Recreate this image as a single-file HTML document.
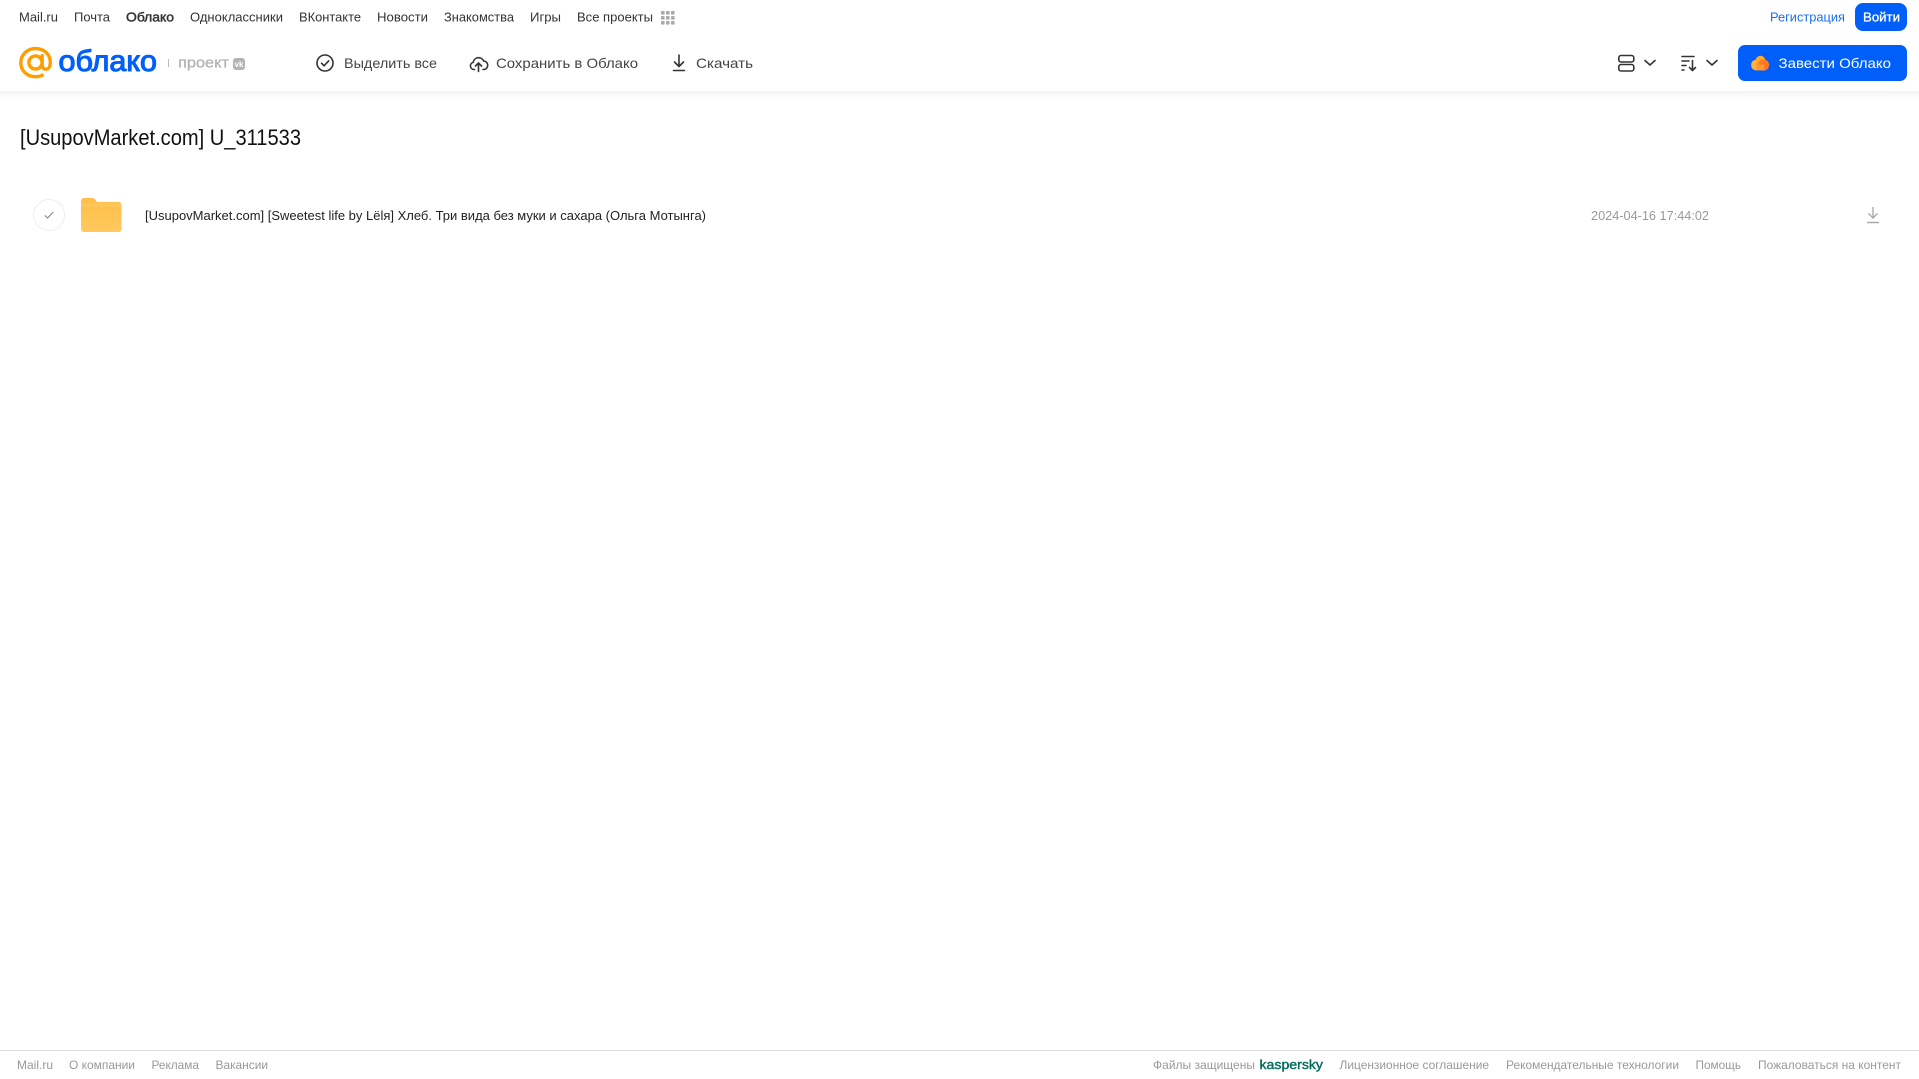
<!DOCTYPE html>
<html lang="ru">
<head>
<meta charset="utf-8">
<title>[UsupovMarket.com] U_311533</title>
<style>
html,body{margin:0;padding:0;width:1919px;height:1079px;overflow:hidden;background:#fff}
svg{position:absolute;left:0;top:0;display:block}
text{font-family:"Liberation Sans",Arial,sans-serif}
.n{font-size:13px;fill:#333}
.h{font-size:14px;fill:#444}
.f{font-size:12px;fill:#999}
.i{fill:none;stroke:#333;stroke-width:1.6;stroke-linecap:round;stroke-linejoin:round}
</style>
</head>
<body>
<svg width="1919" height="1079" viewBox="0 0 1919 1079" xmlns="http://www.w3.org/2000/svg">
<defs>
<linearGradient id="sh" x1="0" y1="0" x2="0" y2="1"><stop offset="0" stop-color="#f4f4f4"/><stop offset="1" stop-color="#fff"/></linearGradient>
<linearGradient id="fd" x1="0" y1="0" x2="0" y2="1"><stop offset="0" stop-color="#ffbe45"/><stop offset="1" stop-color="#ffc95f"/></linearGradient>
</defs>
<rect x="0" y="91" width="1919" height="9" fill="url(#sh)"/>

<!-- top nav -->
<text class="n" x="19" y="21.5" textLength="39" lengthAdjust="spacingAndGlyphs">Mail.ru</text>
<text class="n" x="74" y="21.5" textLength="36" lengthAdjust="spacingAndGlyphs">Почта</text>
<text class="n" x="126" y="21.5" textLength="48" lengthAdjust="spacingAndGlyphs" stroke="#333" stroke-width=".45">Облако</text>
<text class="n" x="190" y="21.5" textLength="93" lengthAdjust="spacingAndGlyphs">Одноклассники</text>
<text class="n" x="299" y="21.5" textLength="62" lengthAdjust="spacingAndGlyphs">ВКонтакте</text>
<text class="n" x="377" y="21.5" textLength="51" lengthAdjust="spacingAndGlyphs">Новости</text>
<text class="n" x="444" y="21.5" textLength="70" lengthAdjust="spacingAndGlyphs">Знакомства</text>
<text class="n" x="530" y="21.5" textLength="31" lengthAdjust="spacingAndGlyphs">Игры</text>
<text class="n" x="577" y="21.5" textLength="76" lengthAdjust="spacingAndGlyphs">Все проекты</text>
<g fill="#aaa">
<rect x="661" y="11" width="3.6" height="3.6" rx=".8"/><rect x="666" y="11" width="3.6" height="3.6" rx=".8"/><rect x="671" y="11" width="3.6" height="3.6" rx=".8"/>
<rect x="661" y="16" width="3.6" height="3.6" rx=".8"/><rect x="666" y="16" width="3.6" height="3.6" rx=".8"/><rect x="671" y="16" width="3.6" height="3.6" rx=".8"/>
<rect x="661" y="21" width="3.6" height="3.6" rx=".8"/><rect x="666" y="21" width="3.6" height="3.6" rx=".8"/><rect x="671" y="21" width="3.6" height="3.6" rx=".8"/>
</g>
<text x="1770" y="21.5" font-size="13" fill="#1a6ff0" textLength="75" lengthAdjust="spacingAndGlyphs">Регистрация</text>
<rect x="1855" y="3" width="52" height="28" rx="8" fill="#005ff9"/>
<text x="1863" y="21.5" font-size="13" fill="#fff" stroke="#fff" stroke-width=".3" textLength="37" lengthAdjust="spacingAndGlyphs">Войти</text>

<!-- logo -->
<circle cx="35.5" cy="62.5" r="6.6" fill="none" stroke="#ff9e00" stroke-width="3.4"/>
<path d="M42.2 55.6V65C42.2 67.8 44 69.2 46 69.2C48.6 69.2 50.3 66.6 50.3 62.5C50.3 53.8 43.6 48.6 35.5 48.6C27.2 48.6 20.8 55 20.8 62.7C20.8 70.8 27.2 76.7 35.5 76.7C38 76.7 40.3 76.2 42.2 75.2" fill="none" stroke="#ff9e00" stroke-width="3.4" stroke-linecap="round"/>
<text x="58.5" y="71" font-size="30" fill="#005ff9" stroke="#005ff9" stroke-width="1.1" stroke-linejoin="round" textLength="98.5" lengthAdjust="spacingAndGlyphs">облако</text>
<rect x="168" y="59" width="1" height="8" fill="#bbb"/>
<text x="178" y="67.5" font-size="15" fill="#b3b3b3" stroke="#b3b3b3" stroke-width=".3" textLength="51" lengthAdjust="spacingAndGlyphs">проект</text>
<rect x="233" y="58" width="12" height="12" rx="3" fill="#b3b3b3"/>
<text x="234.5" y="67" font-size="8" font-weight="bold" fill="#fff" textLength="9" lengthAdjust="spacingAndGlyphs">vk</text>

<!-- toolbar -->
<circle cx="325" cy="63" r="8" class="i"/>
<path d="M321.5 63.2l2.6 2.6 4.6-5" class="i"/>
<text class="h" x="344" y="68" textLength="93" lengthAdjust="spacingAndGlyphs">Выделить все</text>

<path d="M474.5 69.5h-.5a3.6 3.6 0 0 1-.8-7.1 5.5 5.5 0 0 1 10.5-1.4 4.3 4.3 0 0 1 .6 8.5H483" class="i"/>
<path d="M478.5 71.5v-8M475.5 66l3-3 3 3" class="i"/>
<text class="h" x="496" y="68" textLength="142" lengthAdjust="spacingAndGlyphs">Сохранить в Облако</text>

<path d="M679 55v11M674.5 62l4.5 4.5 4.5-4.5M673.5 70.5h11" class="i"/>
<text class="h" x="696" y="68" textLength="57" lengthAdjust="spacingAndGlyphs">Скачать</text>

<rect x="1618.8" y="55.5" width="15" height="6.5" rx="2.2" class="i"/>
<rect x="1618.8" y="64.5" width="15" height="6.5" rx="2.2" class="i"/>
<path d="M1645 60.5l5 4.5 5-4.5" class="i"/>
<path d="M1682 56.5h12M1682 61h7M1682 65.5h4M1682 70h2" class="i" stroke-width="1.2"/>
<path d="M1692.5 60.5v10M1689.5 67.5l3 3 3-3" class="i"/>
<path d="M1707 60.5l5 4.5 5-4.5" class="i"/>

<rect x="1738" y="45" width="169" height="36" rx="7" fill="#005ff9"/>
<circle cx="1756.5" cy="65" r="5.4" fill="#ffb13d"/>
<circle cx="1760.5" cy="60.5" r="4.8" fill="#ffa92e"/>
<circle cx="1763.5" cy="65" r="5.6" fill="#ff7a1f"/>
<path d="M1756 70.4h8v-6h-8z" fill="#ff9a30"/>
<text x="1778.5" y="68" font-size="14" fill="#fff" textLength="112.5" lengthAdjust="spacingAndGlyphs">Завести Облако</text>

<!-- title -->
<text x="20" y="145" font-size="22" fill="#111" textLength="281" lengthAdjust="spacingAndGlyphs">[UsupovMarket.com] U_311533</text>

<!-- row -->
<circle cx="49" cy="215" r="15.5" fill="#fff" stroke="#eee" stroke-width="1"/>
<path d="M44.8 215.3l2.8 2.8 5.6-6" fill="none" stroke="#999" stroke-width="1.3"/>
<path d="M81 201a3 3 0 0 1 3-3h7.5c2 0 3 .8 4 2l1.5 2h21.5a3 3 0 0 1 3 3v24a3 3 0 0 1-3 3H84a3 3 0 0 1-3-3z" fill="url(#fd)"/>
<rect x="81" y="203" width="40" height="4" fill="#ffc759"/>
<text x="145" y="220" font-size="13" fill="#222" textLength="561" lengthAdjust="spacingAndGlyphs">[UsupovMarket.com] [Sweetest life by Lёlя] Хлеб. Три вида без муки и сахара (Ольга Мотынга)</text>
<text x="1591" y="220" font-size="13" fill="#999" textLength="118" lengthAdjust="spacingAndGlyphs">2024-04-16 17:44:02</text>
<path d="M1873 207v11M1868.5 213.5l4.5 4.5 4.5-4.5M1867 222.5h12" fill="none" stroke="#aaa" stroke-width="1.4"/>

<!-- footer -->
<rect x="0" y="1050" width="1919" height="1" fill="#ddd"/>
<text class="f" x="17" y="1069" textLength="36" lengthAdjust="spacingAndGlyphs">Mail.ru</text>
<text class="f" x="69" y="1069" textLength="66" lengthAdjust="spacingAndGlyphs">О компании</text>
<text class="f" x="151.5" y="1069" textLength="47.5" lengthAdjust="spacingAndGlyphs">Реклама</text>
<text class="f" x="215.5" y="1069" textLength="52.5" lengthAdjust="spacingAndGlyphs">Вакансии</text>
<text class="f" x="1153" y="1069" textLength="102" lengthAdjust="spacingAndGlyphs">Файлы защищены</text>
<text x="1259.5" y="1069" font-size="13" fill="#006d5c" stroke="#006d5c" stroke-width=".4" textLength="63.5" lengthAdjust="spacingAndGlyphs">kaspersky</text>
<text class="f" x="1339.5" y="1069" textLength="149.5" lengthAdjust="spacingAndGlyphs">Лицензионное соглашение</text>
<text class="f" x="1506" y="1069" textLength="173" lengthAdjust="spacingAndGlyphs">Рекомендательные технологии</text>
<text class="f" x="1695.5" y="1069" textLength="45.5" lengthAdjust="spacingAndGlyphs">Помощь</text>
<text class="f" x="1758" y="1069" textLength="143" lengthAdjust="spacingAndGlyphs">Пожаловаться на контент</text>
</svg>
</body>
</html>
